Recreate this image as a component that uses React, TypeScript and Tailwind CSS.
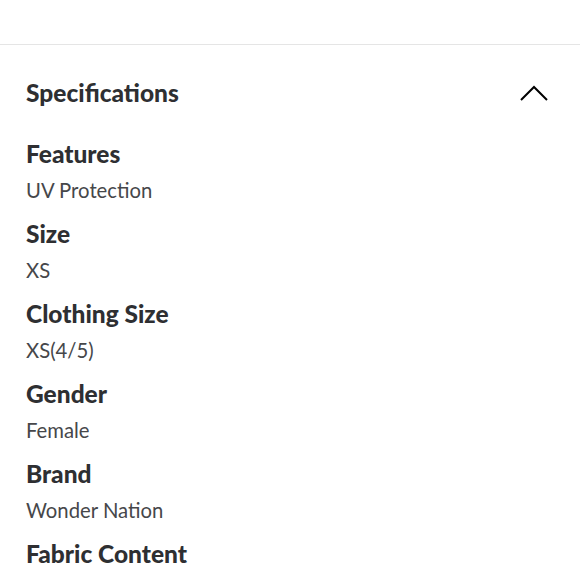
import React from "react";

const specs = [
  ["Features", "UV Protection"],
  ["Size", "XS"],
  ["Clothing Size", "XS(4/5)"],
  ["Gender", "Female"],
  ["Brand", "Wonder Nation"],
  ["Fabric Content", ""],
];

export default function App() {
  return (
    <div className="w-[580px] h-[580px] overflow-hidden bg-white" style={{ fontFamily: "Lato, sans-serif" }}>
      <div className="h-[45px] border-b border-[#e5e5e5]" />
      <div className="px-[26px]">
        <div className="flex items-center justify-between pt-[32px] mb-[27px] h-[64px]">
          <h2 className="text-[24.5px] leading-[32px] font-black text-[#2e2f32]">Specifications</h2>
          <svg width="32" height="20" viewBox="0 0 32 20" className="mr-[4px]">
            <path d="M3 17 L16 4 L29 17" fill="none" stroke="#000" strokeWidth="2" />
          </svg>
        </div>
        <div>
          {specs.map(([k, v]) => (
            <div key={k} className="mb-[8px]">
              <div className="text-[24.5px] leading-[36px] font-black text-[#2e2f32]">{k}</div>
              <div className="text-[20.3px] leading-[36px] text-[#46474a]">{v}</div>
            </div>
          ))}
        </div>
      </div>
    </div>
  );
}
